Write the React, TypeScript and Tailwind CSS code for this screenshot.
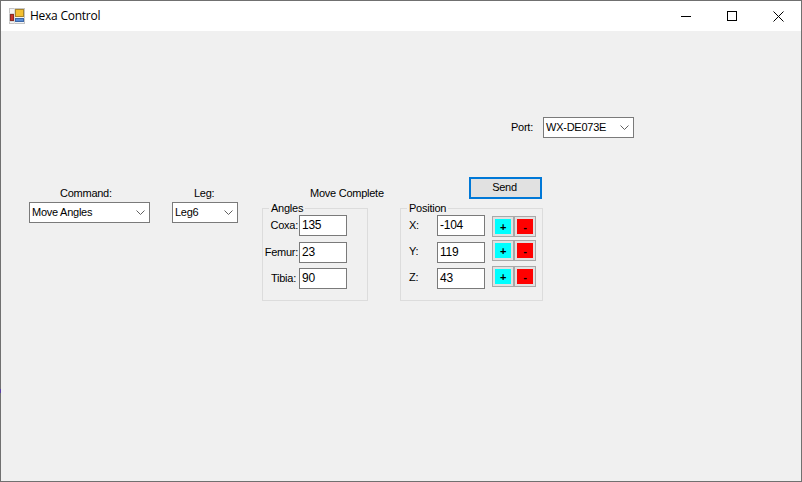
const font = "font-['Liberation_Sans',Arial,sans-serif] text-[11px] tracking-[-0.25px] leading-[16px] text-black";

function Chevron() {
  return (
    <svg width="9" height="5" viewBox="0 0 9 5" fill="none" className="shrink-0">
      <path d="M0.5 0.5 L4.5 4.5 L8.5 0.5" stroke="#606060" strokeWidth="1" />
    </svg>
  );
}

function Combo({ value, width }: { value: string; width: string }) {
  return (
    <div className={`flex h-[21px] items-center justify-between border border-[#7a7a7a] bg-white pl-[2px] pr-[4px] ${width}`}>
      <span className="pb-[2px]">{value}</span>
      <Chevron />
    </div>
  );
}

function Field({ value }: { value: string }) {
  return (
    <div className="flex h-[21px] w-[48px] items-center border border-[#7a7a7a] bg-white pb-[2px] pl-[2px] text-[12px]">{value}</div>
  );
}

function Step({ label, color }: { label: string; color: string }) {
  return (
    <div className="flex h-[21px] w-[22px] items-center justify-center border border-[#a8a8a8] bg-[#e1e1e1] p-[2px]">
      <div className={`flex h-full w-full items-center justify-center font-bold ${color}`}>{label}</div>
    </div>
  );
}

function AngleRow({ label, value, labelClass }: { label: string; value: string; labelClass?: string }) {
  return (
    <div className="flex h-[21px] items-center justify-end gap-px">
      <span className={`pb-[2px] ${labelClass ?? ""}`}>{label}</span>
      <Field value={value} />
    </div>
  );
}

function PosRow({ label, value, btnClass, labelClass }: { label: string; value: string; btnClass: string; labelClass?: string }) {
  return (
    <div className="flex h-[21px] items-start">
      <span className={`h-[21px] w-[36px] pl-[8px] leading-[19px] ${labelClass ?? ""}`}>{label}</span>
      <Field value={value} />
      <div className={`ml-[7px] flex ${btnClass}`}>
        <Step label="+" color="bg-[#00ffff]" />
        <Step label="-" color="bg-[#ff0000]" />
      </div>
    </div>
  );
}

function Group({ title, width, children }: { title: string; width: string; children: React.ReactNode }) {
  return (
    <div className={`relative h-[93px] border border-[#dcdcdc] pt-[6px] ${width}`}>
      <span className="absolute left-[6px] top-[-8px] bg-[#f0f0f0] px-[2px] leading-[14px]">{title}</span>
      {children}
    </div>
  );
}

export default function App() {
  return (
    <div className={`relative flex h-[482px] w-[802px] flex-col border border-[#707070] bg-[#f0f0f0] ${font}`}>
      <header className="flex h-[30px] shrink-0 items-center bg-white">
        <svg width="16" height="16" viewBox="0 0 16 16" className="ml-[8px] shrink-0">
          <rect x="0.5" y="0.5" width="15" height="15" fill="#f4f4f4" stroke="#c4c4c4" />
          <path d="M5.5 0 V16 M0 5.5 H5 M0 13.5 H6 M5 10.5 H16" stroke="#d8d8d8" />
          <rect x="6.5" y="1.5" width="8" height="7" fill="#f3c033" stroke="#a9852a" />
          <rect x="1.5" y="6.5" width="3" height="6" fill="#c8342c" stroke="#8c2a22" />
          <rect x="6.5" y="10.5" width="8" height="3" fill="#5b8fd6" stroke="#3b67a8" />
        </svg>
        <span className="ml-[5px] font-['Open_Sans',sans-serif] text-[12px] tracking-[-0.25px]">Hexa Control</span>
        <div className="ml-auto flex h-full items-center">
          <div className="flex h-full w-[46px] items-center justify-center">
            <svg width="10" height="10" viewBox="0 0 10 10"><path d="M0 5.5 H10" stroke="#000" /></svg>
          </div>
          <div className="flex h-full w-[46px] items-center justify-center">
            <svg width="10" height="10" viewBox="0 0 10 10"><rect x="0.5" y="0.5" width="9" height="9" fill="none" stroke="#000" /></svg>
          </div>
          <div className="flex h-full w-[46px] items-center justify-center">
            <svg width="11" height="11" viewBox="0 0 11 11"><path d="M0.5 0.5 L10.5 10.5 M10.5 0.5 L0.5 10.5" stroke="#000" strokeWidth="1" /></svg>
          </div>
        </div>
      </header>

      <main className="flex-1 pt-[86px]">
        <div className="flex items-center pl-[510px]">
          <span className="w-[32px] pb-[2px]">Port:</span>
          <Combo value="WX-DE073E" width="w-[91px]" />
        </div>

        <div className="mt-[39px] flex items-start pl-[28px]">
          <div className="flex w-[121px] flex-col pt-[8px]">
            <span className="pl-[31px]">Command:</span>
            <Combo value="Move Angles" width="w-full mt-px" />
          </div>
          <div className="ml-[22px] flex w-[66px] flex-col pt-[8px]">
            <span className="pl-[22px]">Leg:</span>
            <Combo value="Leg6" width="w-full mt-px" />
          </div>
          <div className="ml-[24px] w-[106px]">
            <div className="h-[31px] whitespace-nowrap pl-[48px] pt-[8px]">Move Complete</div>
            <Group title="Angles" width="w-[106px]">
              <div className="flex flex-col pr-[20px]">
                <AngleRow label="Coxa:" value="135" />
                <div className="mt-[6px]"><AngleRow label="Femur:" value="23" /></div>
                <div className="mt-[5px]"><AngleRow label="Tibia:" value="90" labelClass="mr-[2px]" /></div>
              </div>
            </Group>
          </div>
          <div className="ml-[32px] flex w-[143px] flex-col">
            <button className="mr-[1px] h-[22px] w-[73px] self-end border-2 border-[#0078d7] bg-[#e1e1e1] pb-[2px] pr-[2px]">Send</button>
            <div className="h-[9px]" />
            <Group title="Position" width="w-[143px]">
              <div className="flex flex-col">
                <PosRow label="X:" value="-104" btnClass="mt-px" labelClass="pt-px" />
                <div className="mt-[6px]"><PosRow label="Y:" value="119" btnClass="mt-[-2px]" /></div>
                <div className="mt-[5px]"><PosRow label="Z:" value="43" btnClass="mt-[-2px]" /></div>
              </div>
            </Group>
          </div>
        </div>
      </main>
      <div className="absolute left-[-1px] top-[388px] h-[4px] w-px bg-[#5a3fa8]" />
    </div>
  );
}
